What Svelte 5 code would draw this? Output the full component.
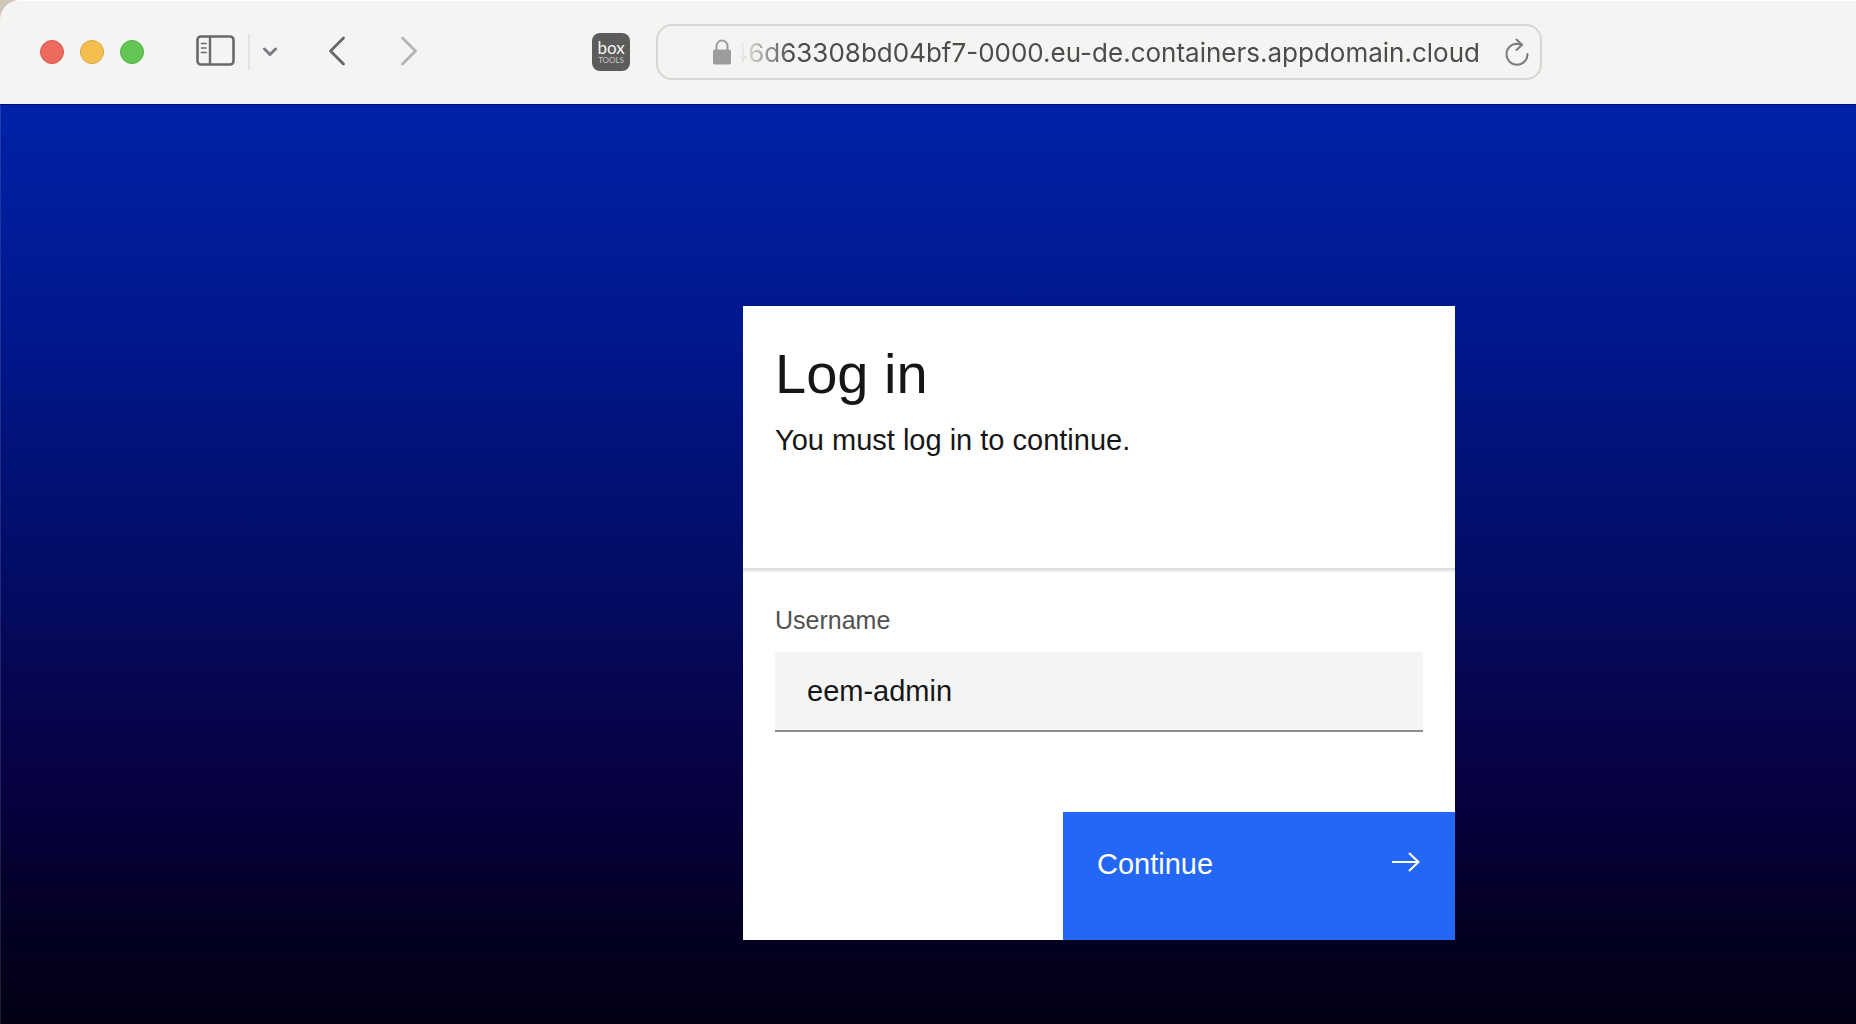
<script>
  let username = $state('eem-admin');
</script>

<div class="window">
  <header class="toolbar">
    <div class="left">
      <div class="lights">
        <button class="light red" aria-label="Close"></button>
        <button class="light yellow" aria-label="Minimise"></button>
        <button class="light green" aria-label="Zoom"></button>
      </div>
      <button class="icon sidebar" aria-label="Show sidebar">
        <svg width="39" height="34" viewBox="0 0 39 34" fill="none" stroke="#696968">
          <rect x="1.5" y="1.5" width="36" height="28" rx="3.5" stroke-width="2.6" />
          <path d="M14 2v28" stroke-width="2.4" />
          <path d="M5.500 8.500h4.500M5.500 13h4.500M5.500 17.500h4.500" stroke-width="1.7" stroke-linecap="round" />
        </svg>
      </button>
      <span class="divider"></span>
      <button class="icon tabs" aria-label="Tab groups">
        <svg width="16" height="10" viewBox="0 0 16 10" fill="none" stroke="#7d7c83" stroke-width="3" stroke-linecap="round" stroke-linejoin="round">
          <path d="M2.500 2l5.500 5.500L13.500 2" />
        </svg>
      </button>
      <button class="icon back" aria-label="Back">
        <svg width="18" height="32" viewBox="0 0 18 32" fill="none" stroke="#666665" stroke-width="2.8" stroke-linecap="round" stroke-linejoin="round">
          <path d="M15.500 2L2.500 15l13 13" />
        </svg>
      </button>
      <button class="icon forward" aria-label="Forward">
        <svg width="18" height="32" viewBox="0 0 18 32" fill="none" stroke="#b4b4b3" stroke-width="2.8" stroke-linecap="round" stroke-linejoin="round">
          <path d="M2.500 2l13 13l-13 13" />
        </svg>
      </button>
    </div>
    <button class="box" aria-label="Box Tools">
      <span class="name">box</span>
      <span class="sub">TOOLS</span>
    </button>
    <div class="address">
      <svg class="lock" width="18" height="26" viewBox="0 0 18 26">
        <path d="M3.500 12V7a5.500 5.500 0 0 1 11 0v5" fill="none" stroke="#9c9c9b" stroke-width="2" />
        <rect x="0" y="10.500" width="18" height="15" rx="2" fill="#9c9c9b" />
      </svg>
      <div class="url"><span>46d63308bd04bf7-0000.eu-de.containers.appdomain.cloud</span></div>
      <button class="icon" aria-label="Reload">
        <svg width="24" height="28" viewBox="0 0 24 28" fill="none" stroke="#7c7c7b" stroke-width="2" stroke-linecap="round" stroke-linejoin="round">
          <path d="M22.500 16A10.500 10.500 0 1 1 12 5.700L17 6.700" />
          <path d="M11.500 1.500L17 6.700L11.500 12" />
        </svg>
      </button>
    </div>
  </header>

  <main>
    <form class="card" onsubmit={(e) => e.preventDefault()}>
      <div class="heading">
        <h1>Log in</h1>
        <p>You must log in to continue.</p>
      </div>
      <div class="field">
        <label for="username">Username</label>
        <input id="username" type="text" autocomplete="off" spellcheck="false" bind:value={username} />
      </div>
      <button class="continue" type="submit">
        <span>Continue</span>
        <svg width="28" height="20" viewBox="0 0 28 20" fill="none" stroke="#fff" stroke-width="2">
          <path d="M0 10h27M17 1l9.500 9L17 19" />
        </svg>
      </button>
    </form>
  </main>
</div>

<style>
  :global(body) {
    margin: 0;
    background: #cfc6b8;
  }
  .window {
    min-height: 100vh;
    display: flex;
    flex-direction: column;
    box-sizing: border-box;
    border-top-left-radius: 20px;
    overflow: hidden;
    font-family: 'Liberation Sans', Arial, sans-serif;
  }
  button {
    font: inherit;
    border: 0;
    padding: 0;
    background: none;
  }
  svg {
    display: block;
    flex: none;
  }
  .toolbar {
    height: 104px;
    box-sizing: border-box;
    display: flex;
    align-items: center;
    background: #f4f4f2;
    box-shadow: inset 0 1px 0 #fff;
  }
  .left {
    display: flex;
    align-items: center;
    width: 592px;
    padding-left: 40px;
    box-sizing: border-box;
    flex: none;
  }
  .lights {
    display: flex;
    gap: 16px;
  }
  .light {
    width: 24px;
    height: 24px;
    border-radius: 50%;
    border: 1px solid;
  }
  .red {
    background: #ed6a5e;
    border-color: #d8564c;
  }
  .yellow {
    background: #f5bf4f;
    border-color: #dba53c;
  }
  .green {
    background: #62c655;
    border-color: #51ad43;
  }
  .sidebar {
    margin-left: 52px;
  }
  .divider {
    width: 2px;
    height: 36px;
    margin-left: 13px;
    background: #e3e3e1;
  }
  .tabs {
    margin-left: 12px;
  }
  .back {
    margin-left: 50px;
  }
  .forward {
    margin-left: 54px;
  }
  .box {
    width: 38px;
    height: 38px;
    border-radius: 8px;
    background: #5c5c5b;
    flex: none;
    display: flex;
    flex-direction: column;
    align-items: center;
    justify-content: center;
    font-family: Lato, sans-serif;
  }
  .name {
    font-size: 17px;
    line-height: 16px;
    font-weight: 400;
    color: #f4f4f4;
  }
  .sub {
    font-size: 8px;
    line-height: 9px;
    color: #c9c9c9;
  }
  .address {
    width: 886px;
    height: 56px;
    box-sizing: border-box;
    margin-left: 26px;
    padding: 0 11px 0 55px;
    border: 2px solid #d6d6d4;
    border-radius: 16px;
    display: flex;
    align-items: center;
    flex: none;
  }
  .url {
    flex: 1;
    min-width: 0;
    margin-right: 25px;
    padding-top: 2px;
    display: flex;
    justify-content: flex-end;
    overflow: hidden;
    white-space: nowrap;
    font-family: Inter, sans-serif;
    font-size: 26px;
    line-height: 32px;
    color: #4c4c4b;
    mask-image: linear-gradient(to right, transparent 8px, #000 60px);
  }
  main {
    flex: 1;
    display: grid;
    grid-template-columns: 743fr 712px 401fr;
    align-items: start;
    padding: 201px 0 84px;
    box-sizing: border-box;
    border-top: 1px solid #001080;
    background: linear-gradient(#0022a8, #001688 28%, #040b60 54%, #07003e 76%, #030022 90%, #020012);
    box-shadow: inset 1px 0 0 rgba(255, 255, 255, 0.12);
  }
  .card {
    grid-column: 2;
    display: flex;
    flex-direction: column;
    background: #fff;
    color: #161616;
  }
  .heading {
    height: 264px;
    box-sizing: border-box;
    padding: 36px 32px 0;
    border-bottom: 2px solid #dedede;
    box-shadow: 0 2px 0 #eee;
  }
  h1 {
    margin: 0;
    font-size: 56px;
    line-height: 64px;
    font-weight: 400;
  }
  p {
    margin: 16px 0 0;
    font-size: 29px;
    line-height: 36px;
  }
  .field {
    display: flex;
    flex-direction: column;
    padding: 34px 32px 80px;
  }
  label {
    font-size: 25px;
    line-height: 32px;
    margin-bottom: 16px;
    color: #525252;
  }
  input {
    height: 80px;
    width: 100%;
    box-sizing: border-box;
    padding: 0 32px;
    border: 0;
    border-bottom: 2px solid #8d8d8d;
    border-radius: 0;
    outline: none;
    background: #f4f4f4;
    color: #161616;
    font-family: inherit;
    font-size: 29px;
  }
  .continue {
    align-self: flex-end;
    width: 392px;
    height: 128px;
    box-sizing: border-box;
    padding: 32px 35px 0 34px;
    display: flex;
    align-items: flex-start;
    justify-content: space-between;
    background: #2567f5;
    color: #fff;
    font-size: 29px;
    line-height: 40px;
  }
  .continue svg {
    margin-top: 8px;
  }
</style>
